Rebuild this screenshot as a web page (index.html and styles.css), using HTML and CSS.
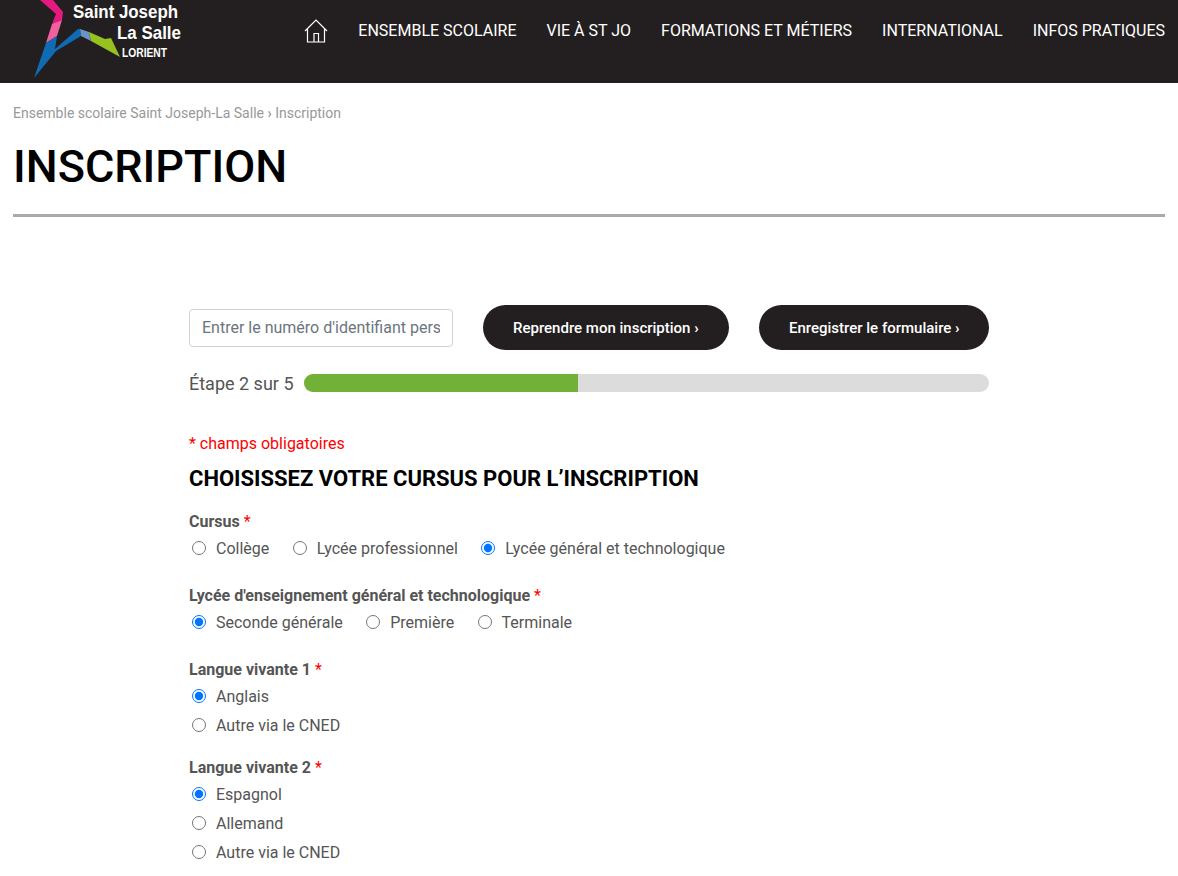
FILE: index.html
```html
<!DOCTYPE html>
<html lang="fr">
<head>
<meta charset="utf-8">
<title>Inscription</title>
<link rel="stylesheet" href="styles.css">
</head>
<body>
<header class="site-header">
  <svg class="logo" width="190" height="83" viewBox="0 0 190 83">
    <path d="M40 0 L53 0 L63 12 L62 20 L52 24 L56 14 Z" fill="#e6197f"/>
    <path d="M52 24 L62 20 L57 36 L46 43 Z" fill="#f0609f"/>
    <path d="M46 43 L57 36 L55 49 L78 29 L80 29 L81 36 L56 51 L34 78 Z" fill="#0f6cb4"/>
    <path d="M80 29 L89 32 L91 41 L81 36 Z" fill="#6a93c7"/>
    <path d="M89 32 L105 39 L111 38 L120 57 L91 41 Z" fill="#97c11f"/>
    <text class="logo-big" x="73" y="18" textLength="105" lengthAdjust="spacingAndGlyphs">Saint Joseph</text>
    <text class="logo-big" x="117" y="39" textLength="64" lengthAdjust="spacingAndGlyphs">La Salle</text>
    <text class="logo-small" x="122" y="57" textLength="45" lengthAdjust="spacingAndGlyphs">LORIENT</text>
  </svg>
  <nav class="main-nav">
    <svg class="home" width="24" height="24" viewBox="0 0 24 24" fill="none" stroke="#fff" stroke-width="1.2">
      <path d="M1 12 L12 1 L23 12 M3.500 10 V23 H20.500 V10 M10 23 V14.500 H14.500 V23"/>
    </svg>
    <a href="#">Ensemble scolaire</a>
    <a href="#">Vie à St Jo</a>
    <a href="#">Formations et métiers</a>
    <a href="#">International</a>
    <a href="#">Infos pratiques</a>
  </nav>
</header>
<main class="page">
  <p class="breadcrumb">Ensemble scolaire Saint Joseph-La Salle <b class="chev">›</b> Inscription</p>
  <h1 class="title">INSCRIPTION</h1>
  <section class="form-wrap">
    <div class="resume">
      <input class="resume-input" type="text" placeholder="Entrer le numéro d'identifiant personnel">
      <a class="pill pill-resume" href="#">Reprendre mon inscription&nbsp;<b class="chev">›</b></a>
      <a class="pill pill-save" href="#">Enregistrer le formulaire&nbsp;<b class="chev">›</b></a>
    </div>
    <div class="progress-row">
      <span class="progress-label">Étape 2 sur 5</span>
      <div class="progress"><div class="progress-fill"></div></div>
    </div>
    <p class="required-note">* champs obligatoires</p>
    <h2 class="section-title">CHOISISSEZ VOTRE CURSUS POUR L’INSCRIPTION</h2>

    <fieldset class="group group-inline">
      <div class="group-label">Cursus <span class="star">*</span></div>
      <div class="options-inline">
        <label class="opt"><input type="radio" name="c">Collège</label>
        <label class="opt"><input type="radio" name="c">Lycée professionnel</label>
        <label class="opt"><input type="radio" name="c" checked>Lycée général et technologique</label>
      </div>
    </fieldset>

    <fieldset class="group group-inline">
      <div class="group-label">Lycée d'enseignement général et technologique <span class="star">*</span></div>
      <div class="options-inline">
        <label class="opt"><input type="radio" name="l" checked>Seconde générale</label>
        <label class="opt"><input type="radio" name="l">Première</label>
        <label class="opt"><input type="radio" name="l">Terminale</label>
      </div>
    </fieldset>

    <fieldset class="group">
      <div class="group-label">Langue vivante 1 <span class="star">*</span></div>
      <div class="options-stack">
        <label class="opt"><input type="radio" name="a" checked>Anglais</label>
        <label class="opt"><input type="radio" name="a">Autre via le CNED</label>
      </div>
    </fieldset>

    <fieldset class="group">
      <div class="group-label">Langue vivante 2 <span class="star">*</span></div>
      <div class="options-stack">
        <label class="opt"><input type="radio" name="b" checked>Espagnol</label>
        <label class="opt"><input type="radio" name="b">Allemand</label>
        <label class="opt"><input type="radio" name="b">Autre via le CNED</label>
      </div>
    </fieldset>
  </section>
</main>
</body>
</html>
```
FILE: styles.css
```css
* { box-sizing: border-box; }
html, body { margin: 0; padding: 0; }
body {
  font-family: Roboto, "Liberation Sans", sans-serif;
  font-size: 16px;
  color: #555;
  background: #fff;
  overflow: hidden;
}
.site-header {
  height: 83px;
  background: #231f20;
  display: flex;
  justify-content: space-between;
  padding-right: 13px;
}
.logo { display: block; flex: none; }
.logo-big {
  font-family: "Liberation Sans", sans-serif;
  font-weight: 700;
  font-size: 19px;
  fill: #fff;
}
.logo-small {
  font-family: "Liberation Sans", sans-serif;
  font-weight: 700;
  font-size: 12px;
  fill: #fff;
}
.main-nav {
  display: flex;
  align-items: center;
  gap: 30px;
  padding-bottom: 22px;
}
.main-nav a {
  color: #fff;
  text-decoration: none;
  text-transform: uppercase;
  font-size: 16px;
}
.home { display: block; }
.page { padding: 0 13px; }
.chev { font-weight: 700; }
.breadcrumb {
  margin: 0;
  padding-top: 21px;
  font-size: 14px;
  line-height: 18px;
  color: #999;
}
.title {
  margin: 0;
  padding: 18px 0 20px;
  font-size: 45px;
  line-height: 54px;
  font-weight: 500;
  color: #000;
  border-bottom: 3px solid #aaa;
}
.form-wrap {
  width: 800px;
  margin: 88px auto 0;
}
.resume {
  display: flex;
  align-items: center;
  height: 45px;
}
.resume-input {
  width: 264px;
  height: 38px;
  padding: 6px 12px;
  font: 16px Roboto, sans-serif;
  color: #495057;
  background: #fff;
  border: 1px solid #ced4da;
  border-radius: 4px;
  margin-right: 30px;
}
.resume-input::placeholder { color: #6c757d; opacity: 1; }
.pill {
  display: flex;
  align-items: center;
  height: 45px;
  padding: 0 30px;
  border-radius: 23px;
  background: #231f20;
  color: #fff;
  text-decoration: none;
  font-size: 15px;
  font-weight: 500;
  white-space: nowrap;
}
.pill-resume { width: 246px; margin-right: 30px; }
.pill-save { width: 230px; }
.progress-row {
  display: flex;
  align-items: center;
  gap: 10px;
  margin-top: 24px;
  height: 18px;
}
.progress-label { font-size: 18px; white-space: nowrap; }
.progress {
  flex: 1;
  height: 18px;
  border-radius: 9px;
  background: #dcdcdc;
  overflow: hidden;
}
.progress-fill { width: 40%; height: 100%; background: #72b138; }
.required-note {
  margin: 42px 0 0;
  color: #f00;
  font-size: 16px;
  line-height: 19px;
}
.section-title {
  margin: 13px 0 0;
  font-size: 22px;
  line-height: 26px;
  font-weight: 700;
  color: #000;
}
.group { border: 0; margin: 0 0 18px; padding: 0; }
.group-inline { margin-bottom: 23px; }
.section-title + .group { margin-top: 18px; }
.group-label {
  font-weight: 700;
  line-height: 24px;
  color: #555;
}
.star { color: #f00; font-weight: 400; }
.options-inline { display: flex; gap: 20.4px; margin-top: 3px; }
.options-stack { display: flex; flex-direction: column; gap: 5px; margin-top: 3px; }
.opt {
  display: flex;
  align-items: center;
  height: 24px;
  line-height: 24px;
}
.opt input {
  width: 14px;
  height: 14px;
  margin: 0 10px 0 3px;
  flex: none;
  position: relative;
  top: -1px;
  accent-color: #0075ff;
}
```
